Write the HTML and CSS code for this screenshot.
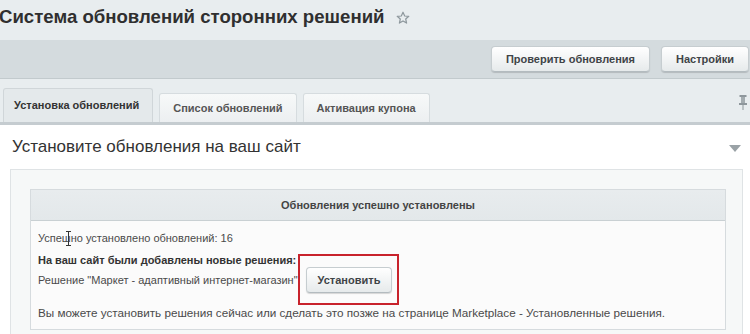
FILE: index.html
```html
<!DOCTYPE html>
<html lang="ru">
<head>
    <meta charset="UTF-8">
    <title>Система обновлений сторонних решений</title>
    <link rel="stylesheet" href="styles.css">
</head>
<body>
    <div class="page">
        <div class="title-bar">
            <h1 class="title">Система обновлений сторонних решений</h1>
            <svg class="star" width="14" height="14" viewBox="0 0 14 14">
                <path d="M7 1.2 L8.7 5 L12.8 5.3 L9.7 8 L10.6 12.1 L7 9.9 L3.4 12.1 L4.3 8 L1.2 5.3 L5.3 5 Z" fill="none" stroke="#8d979c" stroke-width="1.2" stroke-linejoin="round"/>
            </svg>
        </div>
        <div class="toolbar">
            <a class="btn">Проверить обновления</a>
            <a class="btn">Настройки</a>
        </div>
        <div class="tabs">
            <div class="tab tab-active">Установка обновлений</div>
            <div class="tab">Список обновлений</div>
            <div class="tab">Активация купона</div>
            <svg class="pin" width="8" height="16" viewBox="0 0 8 16">
                <rect x="0.5" y="1" width="7" height="2" fill="#8e979c"/>
                <rect x="2" y="3" width="4" height="6" fill="#a3abaf"/>
                <rect x="0" y="9" width="8" height="2" fill="#8e979c"/>
                <rect x="3.5" y="11" width="1" height="5" fill="#8e979c"/>
            </svg>
        </div>
        <div class="content">
            <div class="section-head">
                <span class="section-title">Установите обновления на ваш сайт</span>
                <span class="arrow-down"></span>
            </div>
            <div class="outer-box">
                <div class="inner-box">
                    <div class="inner-head">Обновления успешно установлены</div>
                    <div class="inner-body">
                        <div class="line line-first">Успешно установлено обновлений: 16
                            <svg class="cursor" width="5" height="15" viewBox="0 0 5 15">
                                <path d="M0 0.5 H5 M2.5 0.5 V14.5 M0 14.5 H5" stroke="#333" stroke-width="1" fill="none"/>
                            </svg>
                        </div>
                        <div class="line line-bold">На ваш сайт были добавлены новые решения:</div>
                        <div class="solution-row">
                            <span>Решение "Маркет - адаптивный интернет-магазин"</span>
                            <span class="install-wrap">
                                <a class="btn btn-install">Установить</a>
                                <span class="highlight"></span>
                            </span>
                        </div>
                        <div class="line line-last">Вы можете установить решения сейчас или сделать это позже на странице Marketplace - Установленные решения.</div>
                    </div>
                </div>
            </div>
        </div>
    </div>
</body>
</html>
```

FILE: styles.css
```css
*{
    margin:0;
    padding:0;
    box-sizing: border-box;
}
body{
    background-color: #e8edef;
    font-family: "Liberation Sans", Arial, sans-serif;
    color: #4a4a4a;
    overflow: hidden;
}
.page{
    width: 750px;
    height: 334px;
    overflow: hidden;
}
.title-bar{
    height: 40px;
    display: flex;
    align-items: flex-start;
    padding-top: 6px;
}
.title{
    font-size: 18.6px;
    line-height: 22px;
    font-weight: bold;
    color: #2f2f2f;
    margin-left: -1px;
}
.star{
    margin: 5px 0 0 11px;
}
.toolbar{
    height: 39px;
    background-color: #d4dbde;
    border-bottom: 1px solid #c2cacd;
    display: flex;
    justify-content: flex-end;
    align-items: flex-start;
    gap: 11px;
    padding: 6px 1px 0 0;
}
.btn{
    display: inline-block;
    height: 26px;
    line-height: 25px;
    padding: 0 14px;
    font-size: 11px;
    font-weight: bold;
    color: #3f4447;
    background: linear-gradient(#ffffff, #e6eaeb);
    border: 1px solid #c6cdd0;
    border-bottom-color: #b3bbbf;
    border-radius: 4px;
    box-shadow: 0 1px 1px rgba(0,0,0,0.15);
    cursor: pointer;
}
.tabs{
    height: 46px;
    display: flex;
    align-items: flex-end;
    gap: 6px;
    padding-left: 3px;
    border-bottom: 3px solid #c5ccd0;
    position: relative;
}
.tab{
    height: 29px;
    line-height: 28px;
    padding: 0 13px;
    font-size: 11px;
    font-weight: bold;
    color: #555;
    background: linear-gradient(#f7f9f9, #eceff1);
    border: 1px solid #d6dcdf;
    border-bottom: 0;
    border-radius: 3px 3px 0 0;
}
.tab-active{
    height: 34px;
    line-height: 32px;
    padding: 0 13px 0 10px;
    color: #333;
    background: #e4e9eb;
    border-color: #d0d6d9;
}
.pin{
    position: absolute;
    right: 3px;
    top: 15px;
}
.content{
    background-color: #fff;
    padding-bottom: 20px;
}
.section-head{
    height: 44px;
    display: flex;
    align-items: center;
    justify-content: space-between;
    padding: 0 9px 0 12px;
}
.section-title{
    font-size: 17px;
    color: #333;
}
.arrow-down{
    width: 0;
    height: 0;
    border-left: 6px solid transparent;
    border-right: 6px solid transparent;
    border-top: 7px solid #9aa2a6;
    margin-top: 3px;
}
.outer-box{
    margin: 0 7px 0 10px;
    background-color: #f6f8f8;
    border: 1px solid #dfe3e5;
    padding: 19px 16px 10px 19px;
}
.inner-box{
    border: 1px solid #d6dbde;
    background-color: #fbfbfb;
}
.inner-head{
    height: 31px;
    line-height: 30px;
    text-align: center;
    font-size: 11px;
    font-weight: bold;
    color: #444;
    background: linear-gradient(#e8ecee, #e3e8ea);
    border-bottom: 1px solid #c9d0d3;
}
.inner-body{
    padding: 9px 7px 8px 7px;
    font-size: 11px;
}
.line{
    line-height: 16px;
}
.line-first{
    position: relative;
}
.cursor{
    position: absolute;
    left: 28px;
    top: 1px;
}
.line-bold{
    margin-top: 7px;
    line-height: 14px;
    font-weight: bold;
    color: #333;
}
.solution-row{
    display: flex;
    align-items: center;
    height: 26px;
}
.install-wrap{
    position: relative;
    margin-left: 8px;
}
.btn-install{
    padding: 0 11px;
}
.highlight{
    position: absolute;
    left: -8px;
    top: -13px;
    width: 101px;
    height: 51px;
    border: 2px solid #c8232c;
}
.line-last{
    margin-top: 12px;
    font-size: 11.7px;
}
```
